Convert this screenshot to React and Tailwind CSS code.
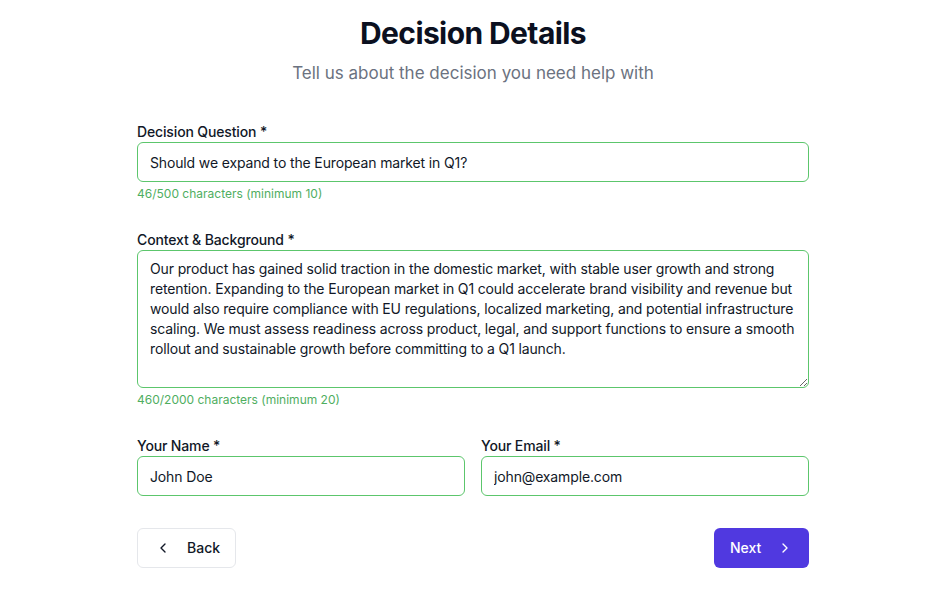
import React from "react";

const font = { fontFamily: "Inter, 'Noto Sans', sans-serif", letterSpacing: "-0.01em" };

function Chevron({ dir = "left" }) {
  return (
    <svg width="16" height="16" viewBox="0 0 24 24" fill="none" stroke="currentColor" strokeWidth="2" strokeLinecap="round" strokeLinejoin="round">
      {dir === "left" ? <path d="m15 18-6-6 6-6" /> : <path d="m9 18 6-6-6-6" />}
    </svg>
  );
}

export default function App() {
  const ctx =
    "Our product has gained solid traction in the domestic market, with stable user growth and strong retention. Expanding to the European market in Q1 could accelerate brand visibility and revenue but would also require compliance with EU regulations, localized marketing, and potential infrastructure scaling. We must assess readiness across product, legal, and support functions to ensure a smooth rollout and sustainable growth before committing to a Q1 launch.";
  const inputCls =
    "block h-10 w-full rounded-md border border-[#5cc66c] bg-white px-3 text-sm tracking-[-0.01em] text-[#111827] outline-none";
  const labelCls = "block text-sm leading-5 font-medium tracking-[-0.01em] text-[#111827] mb-[0px]";
  return (
    <div className="min-h-screen bg-white pl-[18px] font-[Inter]" style={{ fontFamily: font.fontFamily }}>
      <div className="mx-auto w-[672px] pt-[15px]">
        <h1 className="text-center text-[30px] leading-9 font-bold tracking-[-0.02em] text-[#0b1020]">Decision Details</h1>
        <p className="mt-[8px] text-center text-[17px] leading-7 text-[#6b7280]">Tell us about the decision you need help with</p>

        <div className="mt-[35px]">
          <label className={labelCls}>Decision Question *</label>
          <input readOnly value="Should we expand to the European market in Q1?" className={inputCls} style={font} />
          <p className="mt-[4px] text-xs leading-4 text-[#4fae5f]">46/500 characters (minimum 10)</p>
        </div>

        <div className="mt-[28px]">
          <label className={labelCls}>Context &amp; Background *</label>
          <textarea
            readOnly
            value={ctx}
            rows={6}
            className="block h-[138px] w-full resize-y rounded-md border border-[#5cc66c] bg-white px-3 py-2 text-sm leading-5 text-[#111827] outline-none"
            style={font}
          />
          <p className="mt-[4px] text-xs leading-4 text-[#4fae5f]">460/2000 characters (minimum 20)</p>
        </div>

        <div className="mt-[28px] grid grid-cols-2 gap-4">
          <div>
            <label className={labelCls}>Your Name *</label>
            <input readOnly value="John Doe" className={inputCls} style={font} />
          </div>
          <div>
            <label className={labelCls}>Your Email *</label>
            <input readOnly value="john@example.com" className={inputCls} style={font} />
          </div>
        </div>

        <div className="mt-8 flex items-center justify-between">
          <button className="flex h-10 w-[99px] items-center gap-4 rounded-md border border-[#e5e7eb] bg-white pl-[17px] text-sm font-medium text-[#111827]">
            <Chevron dir="left" />
            Back
          </button>
          <button className="flex h-10 w-[95px] items-center gap-4 rounded-md bg-[#5039e0] pl-4 text-sm font-medium text-white">
            Next
            <Chevron dir="right" />
          </button>
        </div>
      </div>
    </div>
  );
}
